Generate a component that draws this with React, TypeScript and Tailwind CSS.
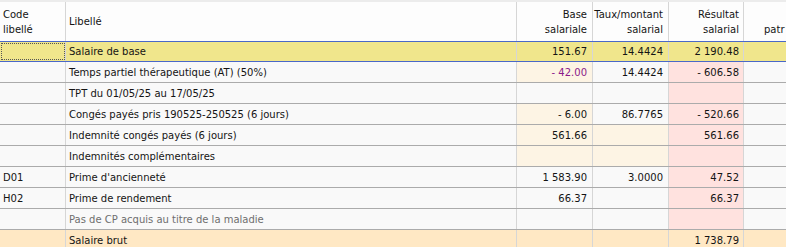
import React from 'react';

type Row = {
  code?: string;
  label: string;
  base?: string;
  taux?: string;
  result?: string;
  kind?: 'selected' | 'total' | 'note';
  baseBg?: boolean;
  tauxBg?: boolean;
  resultBg?: boolean;
  baseNeg?: boolean;
};

const rows: Row[] = [
  { label: 'Salaire de base', base: '151.67', taux: '14.4424', result: '2 190.48', kind: 'selected' },
  { label: 'Temps partiel thérapeutique (AT) (50%)', base: '- 42.00', taux: '14.4424', result: '- 606.58', baseBg: true, resultBg: true, baseNeg: true },
  { label: 'TPT du 01/05/25 au 17/05/25', resultBg: true },
  { label: 'Congés payés pris 190525-250525 (6 jours)', base: '- 6.00', taux: '86.7765', result: '- 520.66', baseBg: true, resultBg: true },
  { label: 'Indemnité congés payés (6 jours)', base: '561.66', result: '561.66', baseBg: true, tauxBg: true, resultBg: true },
  { label: 'Indemnités complémentaires', baseBg: true, tauxBg: true, resultBg: true },
  { code: 'D01', label: "Prime d'ancienneté", base: '1 583.90', taux: '3.0000', result: '47.52', resultBg: true },
  { code: 'H02', label: 'Prime de rendement', base: '66.37', result: '66.37', resultBg: true },
  { label: 'Pas de CP acquis au titre de la maladie', resultBg: true, kind: 'note' },
  { label: 'Salaire brut', result: '1 738.79', kind: 'total' },
];

const cell = 'h-full flex items-center border-r border-[#d6d6d6] shrink-0';

const App = () => {
  return (
    <div
      className="w-[786px] h-[247px] overflow-hidden bg-[#f9f9f9] text-[10px] text-[#141414]"
      style={{ fontFamily: '"DejaVu Sans", Verdana, sans-serif' }}
    >
      {/* header */}
      <div className="h-[41px] flex bg-[#fdfdfd] border-t-2 border-[#ececec] leading-[15px]">
        <div className={`${cell} w-[66px] pl-[3px]`}>
          <div>Code<br />libellé</div>
        </div>
        <div className={`${cell} w-[451px] pl-[3px]`}>Libellé</div>
        <div className={`${cell} w-[76px] pr-[5px] flex-col !items-end justify-center`}>
          <span className="whitespace-nowrap">Base</span>
          <span className="whitespace-nowrap">salariale</span>
        </div>
        <div className={`${cell} w-[76px] pr-[5px] flex-col !items-end justify-center`}>
          <span className="whitespace-nowrap">Taux/montant</span>
          <span className="whitespace-nowrap">salarial</span>
        </div>
        <div className={`${cell} w-[75px] pr-[4px] flex-col !items-end justify-center`}>
          <span className="whitespace-nowrap">Résultat</span>
          <span className="whitespace-nowrap">salarial</span>
        </div>
        <div className="h-full flex flex-col justify-center pl-[20px] whitespace-nowrap">
          <span>&nbsp;</span>
          <span>patr</span>
        </div>
      </div>

      {rows.map((r, i) => {
        const selected = r.kind === 'selected';
        const total = r.kind === 'total';
        const rowCls = selected
          ? 'h-[21px] bg-[#f0e68c] border-y border-[#4a68c8]'
          : total
            ? 'h-[21px] bg-[#ffe8c4]'
            : 'h-[21px] border-b border-[#ababab]';
        return (
          <div key={i} className={`flex ${rowCls}`}>
            <div className={`${cell} w-[66px] pl-[3px] ${selected ? 'outline-1 outline-dotted outline-[#555] -outline-offset-2' : ''}`}>
              {r.code}
            </div>
            <div className={`${cell} w-[451px] pl-[3px] whitespace-nowrap ${r.kind === 'note' ? 'text-[#6e6e6e]' : ''}`}>
              {r.label}
            </div>
            <div className={`${cell} w-[76px] justify-end pr-[5px] ${r.baseBg ? 'bg-[#fdf4e4]' : ''} ${r.baseNeg ? 'text-[#8a1a8a]' : ''}`}>
              {r.base}
            </div>
            <div className={`${cell} w-[76px] justify-end pr-[5px] ${r.tauxBg ? 'bg-[#fdf4e4]' : ''}`}>
              {r.taux}
            </div>
            <div className={`${cell} w-[75px] justify-end pr-[4px] ${r.resultBg ? 'bg-[#ffe2df]' : ''}`}>
              {r.result}
            </div>
            <div className="h-full flex-1" />
          </div>
        );
      })}
    </div>
  );
};

export default App;
